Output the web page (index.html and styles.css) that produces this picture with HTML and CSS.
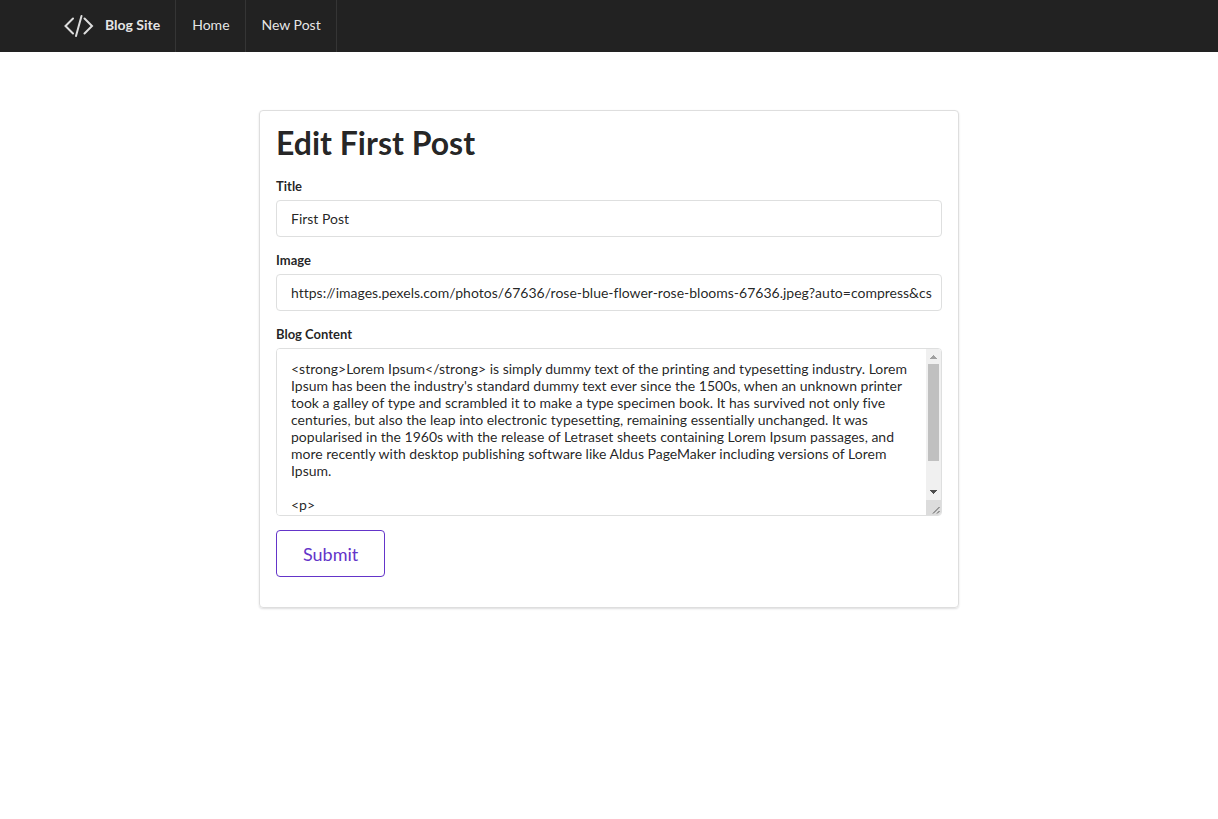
FILE: index.html
```html
<!DOCTYPE html>
<html lang="en">
<head>
<meta charset="utf-8">
<meta name="viewport" content="width=device-width, initial-scale=1">
<title>Blog Site</title>
<link rel="stylesheet" href="styles.css">
</head>
<body>
<nav class="menu">
  <a class="item brand" href="#">
    <svg class="logo" viewBox="0 0 30 24" aria-hidden="true"><path d="M9 5.500 1.500 13l7.500 7.500M20.500 5.500 28 13l-7.500 7.500M17.500 3 12 23"/></svg>
    Blog Site
  </a>
  <a class="item" href="#">Home</a>
  <a class="item" href="#">New Post</a>
</nav>
<main class="segment">
  <h1 class="heading">Edit First Post</h1>
  <form class="form">
    <label class="label" for="title">Title</label>
    <input class="field" id="title" type="text" value="First Post">
    <label class="label" for="image">Image</label>
    <input class="field" id="image" type="text" value="https://images.pexels.com/photos/67636/rose-blue-flower-rose-blooms-67636.jpeg?auto=compress&amp;cs">
    <label class="label" for="content">Blog Content</label>
    <div class="area-wrap">
      <textarea class="field area" id="content">&lt;strong&gt;Lorem Ipsum&lt;/strong&gt; is simply dummy text of the printing and typesetting industry. Lorem Ipsum has been the industry's standard dummy text ever since the 1500s, when an unknown printer took a galley of type and scrambled it to make a type specimen book. It has survived not only five centuries, but also the leap into electronic typesetting, remaining essentially unchanged. It was popularised in the 1960s with the release of Letraset sheets containing Lorem Ipsum passages, and more recently with desktop publishing software like Aldus PageMaker including versions of Lorem Ipsum.

&lt;p&gt;

&lt;/p&gt;</textarea>
      <div class="scrollbar" aria-hidden="true">
        <svg class="arrow up" viewBox="0 0 15 15"><path d="M4 10h7v-1h-1v-1h-1v-1h-1v-1h-1v1h-1v1h-1v1h-1z"/></svg>
        <div class="track"><div class="thumb"></div></div>
        <svg class="arrow" viewBox="0 0 15 15"><path d="M4 5h7v1h-1v1h-1v1h-1v1h-1v-1h-1v-1h-1v-1h-1z"/></svg>
        <svg class="grip" viewBox="0 0 15 15"><path d="M7 13.500 13.500 7M11 13.500 13.500 11"/></svg>
      </div>
    </div>
    <button class="submit" type="submit">Submit</button>
  </form>
</main>
</body>
</html>
```
FILE: styles.css
```css
* { box-sizing: border-box; }
body {
  margin: 0;
  background: #fff;
  color: rgba(0, 0, 0, 0.87);
  font: 14px/20px Lato, "Liberation Sans", sans-serif;
  font-variant-ligatures: none;
}
.menu {
  display: flex;
  height: 52px;
  padding: 0 48px;
  background: #222;
}
.item {
  display: flex;
  align-items: center;
  padding: 0 15px 2px 16px;
  border-right: 1px solid #353535;
  color: rgba(255, 255, 255, 0.9);
  text-decoration: none;
}
.brand { font-weight: 700; gap: 11px; }
.logo {
  width: 30px;
  height: 24px;
  fill: none;
  stroke: #ddd;
  stroke-width: 2;
  stroke-linecap: round;
}
.segment {
  max-width: 700px;
  margin: 58px auto;
  padding: 16px 16px 30px;
  border: 1px solid #dedede;
  border-radius: 4px;
  box-shadow: 0 1px 2px rgba(34, 36, 38, 0.15);
}
.heading {
  margin: 0 0 18px;
  font-size: 32px;
  line-height: 32px;
  font-weight: 700;
}
.form { display: flex; flex-direction: column; align-items: flex-start; }
.label {
  margin-bottom: 4px;
  font-size: 13px;
  line-height: 19px;
  font-weight: 700;
}
.field {
  width: 100%;
  height: 37px;
  margin: 0 0 14px;
  padding: 9px 8px 9px 14px;
  border: 1px solid #dedfdf;
  border-radius: 4px;
  background: #fff;
  color: rgba(0, 0, 0, 0.87);
  font: 14px/17px Lato, "Liberation Sans", sans-serif;
  font-variant-ligatures: none;
}
.area-wrap {
  position: relative;
  width: 100%;
  margin-bottom: 14px;
}
.area {
  display: block;
  height: 168px;
  margin: 0;
  padding: 11px 28px 11px 14px;
  resize: none;
}
.scrollbar {
  position: absolute;
  top: 1px;
  right: 1px;
  bottom: 1px;
  display: flex;
  flex-direction: column;
  width: 15px;
  border-radius: 0 3px 3px 0;
  background: #f0f0f0;
  overflow: hidden;
  pointer-events: none;
}
.arrow { height: 15px; fill: #4d4d4d; }
.up { fill: #a0a0a0; }
.track { flex: 1; padding: 0 2px; }
.thumb { height: 80%; background: #c0c0c0; }
.grip {
  height: 15px;
  background: #dcdcdc;
  fill: none;
  stroke: #555;
}
.submit {
  padding: 15px 26px 13px;
  border: 1px solid #6435c9;
  border-radius: 4px;
  background: transparent;
  color: #6435c9;
  font: 18px/17px Lato, "Liberation Sans", sans-serif;
}
```
